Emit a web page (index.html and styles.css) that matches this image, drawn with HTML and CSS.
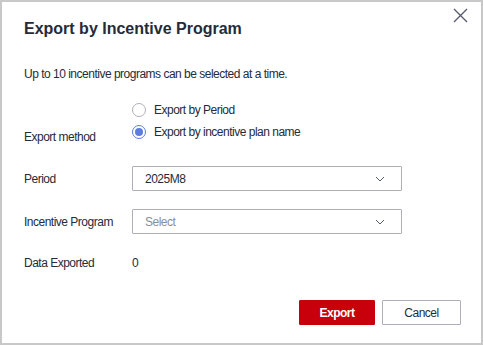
FILE: index.html
```html
<!DOCTYPE html>
<html lang="en">
<head>
    <meta charset="UTF-8">
    <title>Export by Incentive Program</title>
    <link rel="stylesheet" href="styles.css">
</head>
<body>

    <!-- Export dialog -->
    <div class="dialog">
        <button class="close-button" aria-label="Close">
            <svg width="15" height="15" viewBox="0 0 15 15"><path d="M1 1L14 14M14 1L1 14" stroke="#575d6c" stroke-width="1.4" fill="none"/></svg>
        </button>

        <h2 class="dialog-title">Export by Incentive Program</h2>

        <p class="notice">Up to 10 incentive programs can be selected at a time.</p>

        <div class="form-row method-row">
            <div class="form-label">Export method</div>
            <div class="radio-group">
                <label class="radio"><span class="radio-dot"></span>Export by Period</label>
                <label class="radio checked"><span class="radio-dot"></span>Export by incentive plan name</label>
            </div>
        </div>

        <div class="form-row period-row">
            <div class="form-label">Period</div>
            <div class="select">
                <span>2025M8</span>
                <svg width="10" height="6" viewBox="0 0 10 6"><path d="M1 1L5 5L9 1" stroke="#575d6c" stroke-width="1" fill="none"/></svg>
            </div>
        </div>

        <div class="form-row program-row">
            <div class="form-label">Incentive Program</div>
            <div class="select">
                <span class="placeholder">Select</span>
                <svg width="10" height="6" viewBox="0 0 10 6"><path d="M1 1L5 5L9 1" stroke="#575d6c" stroke-width="1" fill="none"/></svg>
            </div>
        </div>

        <div class="form-row data-row">
            <div class="form-label">Data Exported</div>
            <div class="form-value">0</div>
        </div>

        <div class="dialog-footer">
            <button class="btn btn-primary">Export</button>
            <button class="btn">Cancel</button>
        </div>
    </div>

</body>
</html>
```

FILE: styles.css
```css
/* Basic Body Styles */
body {
    margin: 0;
    font-family: 'Liberation Sans', Arial, sans-serif;
    color: #252b3a;
    background: #ffffff;
}

/* Dialog frame */
.dialog {
    position: relative;
    width: 483px;
    height: 345px;
    box-sizing: border-box;
    border: 2px solid #c8c8c8;
    padding: 15px 20px 0 22px;
    font-size: 12px;
    letter-spacing: -0.5px;
}

.close-button {
    position: absolute;
    top: 6px;
    right: 13px;
    padding: 0;
    border: none;
    background: none;
    display: flex;
    cursor: pointer;
}

.dialog-title {
    margin: 0;
    font-size: 16px;
    line-height: 24px;
    font-weight: 700;
    letter-spacing: 0;
}

.notice {
    margin: 23px 0 0;
    line-height: 20px;
}

/* Form rows */
.form-row {
    display: flex;
    align-items: center;
}

.form-label {
    width: 108px;
    flex-shrink: 0;
    line-height: 20px;
}

.method-row {
    margin-top: 15px;
    align-items: flex-start;
}
.method-row .form-label {
    padding-top: 28px;
    margin-bottom: -4px;
}

.radio-group {
    display: flex;
    flex-direction: column;
}

.radio {
    display: flex;
    align-items: center;
    height: 22px;
    gap: 8px;
    cursor: pointer;
}

.radio-dot {
    width: 14px;
    height: 14px;
    box-sizing: border-box;
    border: 1px solid #adb0b8;
    border-radius: 50%;
    display: flex;
    align-items: center;
    justify-content: center;
}
.radio.checked .radio-dot {
    border-color: #5e7ce0;
}
.radio.checked .radio-dot::after {
    content: '';
    width: 8px;
    height: 8px;
    border-radius: 50%;
    background: #5e7ce0;
}

.period-row { margin-top: 23px; }
.program-row { margin-top: 18px; }
.data-row { margin-top: 19px; }

.select {
    width: 270px;
    height: 25px;
    box-sizing: border-box;
    border: 1px solid #adb0b8;
    border-radius: 1px;
    display: flex;
    align-items: center;
    justify-content: space-between;
    padding: 0 16px 0 12px;
}
.select .placeholder { color: #8a8e99; }

/* Footer buttons */
.dialog-footer {
    display: flex;
    justify-content: flex-end;
    gap: 7px;
    margin-top: 27px;
}

.btn {
    height: 25px;
    min-width: 79px;
    box-sizing: border-box;
    border: 1px solid #adb0b8;
    border-radius: 1px;
    background: #ffffff;
    color: #252b3a;
    font-family: inherit;
    font-size: 12px;
    letter-spacing: -0.5px;
    cursor: pointer;
}
.btn-primary {
    min-width: 76px;
    border-color: #c7000b;
    background: #c7000b;
    color: #ffffff;
    font-weight: 700;
}
```
